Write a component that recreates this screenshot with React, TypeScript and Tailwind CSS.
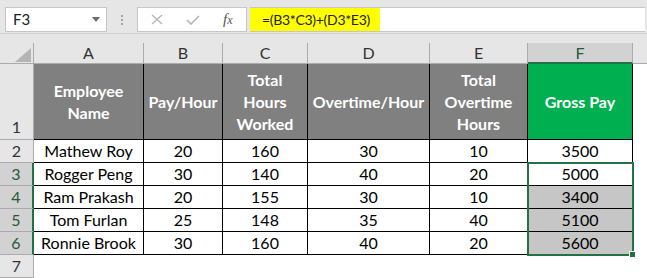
import React from "react";

const data = [
  ["Mathew Roy", "20", "160", "30", "10", "3500"],
  ["Rogger Peng", "30", "140", "40", "20", "5000"],
  ["Ram Prakash", "20", "155", "30", "10", "3400"],
  ["Tom Furlan", "25", "148", "35", "40", "5100"],
  ["Ronnie Brook", "30", "160", "40", "20", "5600"],
];

const letters = ["A", "B", "C", "D", "E", "F"];
const headers: React.ReactNode[] = [
  <>Employee<br />Name</>,
  <>Pay/Hour</>,
  <>Total<br />Hours<br />Worked</>,
  <>Overtime/Hour</>,
  <>Total<br />Overtime<br />Hours</>,
  <>Gross Pay</>,
];

export default function App() {
  return (
    <div
      className="relative w-[647px] h-[278px] overflow-hidden bg-[#e6e6e6] text-[16px]"
      style={{ fontFamily: "Lato, 'Noto Sans', sans-serif" }}
    >
      {/* Formula bar area */}
      <div className="h-[34px] flex items-start pt-[7px] pl-[5px] border-b border-[#d0d0d0]">
        <div className="w-[102px] h-[25px] bg-white border border-[#c6c6c6] flex items-center pl-[7px] pr-[6px] justify-between text-[#222] text-[15px]">
          <span className="leading-none">F3</span>
          <svg width="8" height="5" viewBox="0 0 8 5">
            <polygon points="0,0 8,0 4,5" fill="#6b6b6b" />
          </svg>
        </div>
        <div className="w-[30px] h-[25px] flex flex-col items-center justify-center gap-[2px]">
          <div className="w-[2px] h-[2px] bg-[#a6a6a6]" />
          <div className="w-[2px] h-[2px] bg-[#a6a6a6]" />
          <div className="w-[2px] h-[2px] bg-[#a6a6a6]" />
        </div>
        <div className="w-[110px] h-[25px] bg-white border border-[#c6c6c6] flex items-center">
          <svg className="ml-[13px]" width="12" height="11" viewBox="0 0 12 11">
            <path d="M1 1 L11 10 M11 1 L1 10" stroke="#b4b4b4" strokeWidth="1.3" />
          </svg>
          <svg className="ml-[23px]" width="14" height="10" viewBox="0 0 14 10">
            <path d="M1 5 L5 9 L13 1" stroke="#b4b4b4" strokeWidth="1.6" fill="none" />
          </svg>
          <span
            className="ml-[23px] italic text-[15px] text-[#555] leading-none"
            style={{ fontFamily: "'Liberation Serif', serif" }}
          >
            f<span className="text-[12px]">x</span>
          </span>
        </div>
        <div className="ml-[3px] w-[395px] h-[25px] bg-white border-y border-[#c6c6c6] flex items-stretch">
          <div className="w-[130px] bg-[#ffff00] flex items-center pl-[12px] text-[#222] text-[14px] tracking-[-0.3px] whitespace-nowrap">
            =(B3*C3)+(D3*E3)
          </div>
        </div>
      </div>
      <div className="h-[9px]" />

      {/* Grid */}
      <div className="grid grid-cols-[34px_110px_79px_85px_122px_98px_105px_14px] grid-rows-[21px_76px_23px_23px_23px_23px_23px_23px]">
        {/* column header row */}
        <div className="relative border-r border-b border-[#ababab] bg-[#e6e6e6]">
          <svg className="absolute left-[15px] top-[5px]" width="16" height="14" viewBox="0 0 16 14">
            <polygon points="16,0 16,14 0,14" fill="#b4b4b4" />
          </svg>
        </div>
        {letters.map((l) =>
          l === "F" ? (
            <div
              key={l}
              className="bg-[#d2d2d2] border-r border-[#ababab] border-b-2 border-b-[#217346] flex items-center justify-center text-[#1e5c3a]"
            >
              {l}
            </div>
          ) : (
            <div
              key={l}
              className="bg-[#e6e6e6] border-r border-b border-[#ababab] flex items-center justify-center text-[#333]"
            >
              {l}
            </div>
          )
        )}
        <div className="bg-[#e6e6e6] border-b border-[#ababab]" />

        {/* row 1 headers */}
        <div className="bg-[#e6e6e6] border-r border-b border-[#ababab] flex items-end justify-center text-[#333]">
          1
        </div>
        {headers.map((h, i) => (
          <div
            key={i}
            className={`${i === 5 ? "bg-[#00b050]" : "bg-[#808080]"} border-r border-b border-black flex items-center justify-center text-center text-white font-bold leading-[22px]`}
          >
            <div>{h}</div>
          </div>
        ))}
        <div className="bg-white" />

        {data.map((row, r) => {
          const sel = r >= 1;
          return (
            <React.Fragment key={r}>
              <div
                className={`${sel ? "bg-[#d2d2d2] border-r-2 border-r-[#217346] text-[#1e5c3a]" : "bg-[#e6e6e6] border-r border-r-[#ababab] text-[#333]"} border-b border-b-[#ababab] flex items-center justify-center`}
              >
                {r + 2}
              </div>
              {row.map((c, ci) => (
                <div
                  key={ci}
                  className={`${ci === 5 && r >= 2 ? "bg-[#c6c6c6]" : "bg-white"} border-r border-b border-black flex items-center justify-center text-black whitespace-nowrap`}
                >
                  {c}
                </div>
              ))}
              <div className="bg-white" />
            </React.Fragment>
          );
        })}

        {/* row 7 */}
        <div className="bg-[#e6e6e6] border-r border-b border-[#ababab] flex items-center justify-center text-[#333]">
          7
        </div>
        <div className="col-span-7 bg-white" />
      </div>

      {/* selection overlay F3:F6 */}
      <div className="absolute left-[527px] top-[162px] w-[107px] h-[94px] border-2 border-[#217346] pointer-events-none" />
      <div className="absolute left-[629px] top-[251px] w-[7px] h-[7px] bg-[#217346] border border-white pointer-events-none" />
    </div>
  );
}
